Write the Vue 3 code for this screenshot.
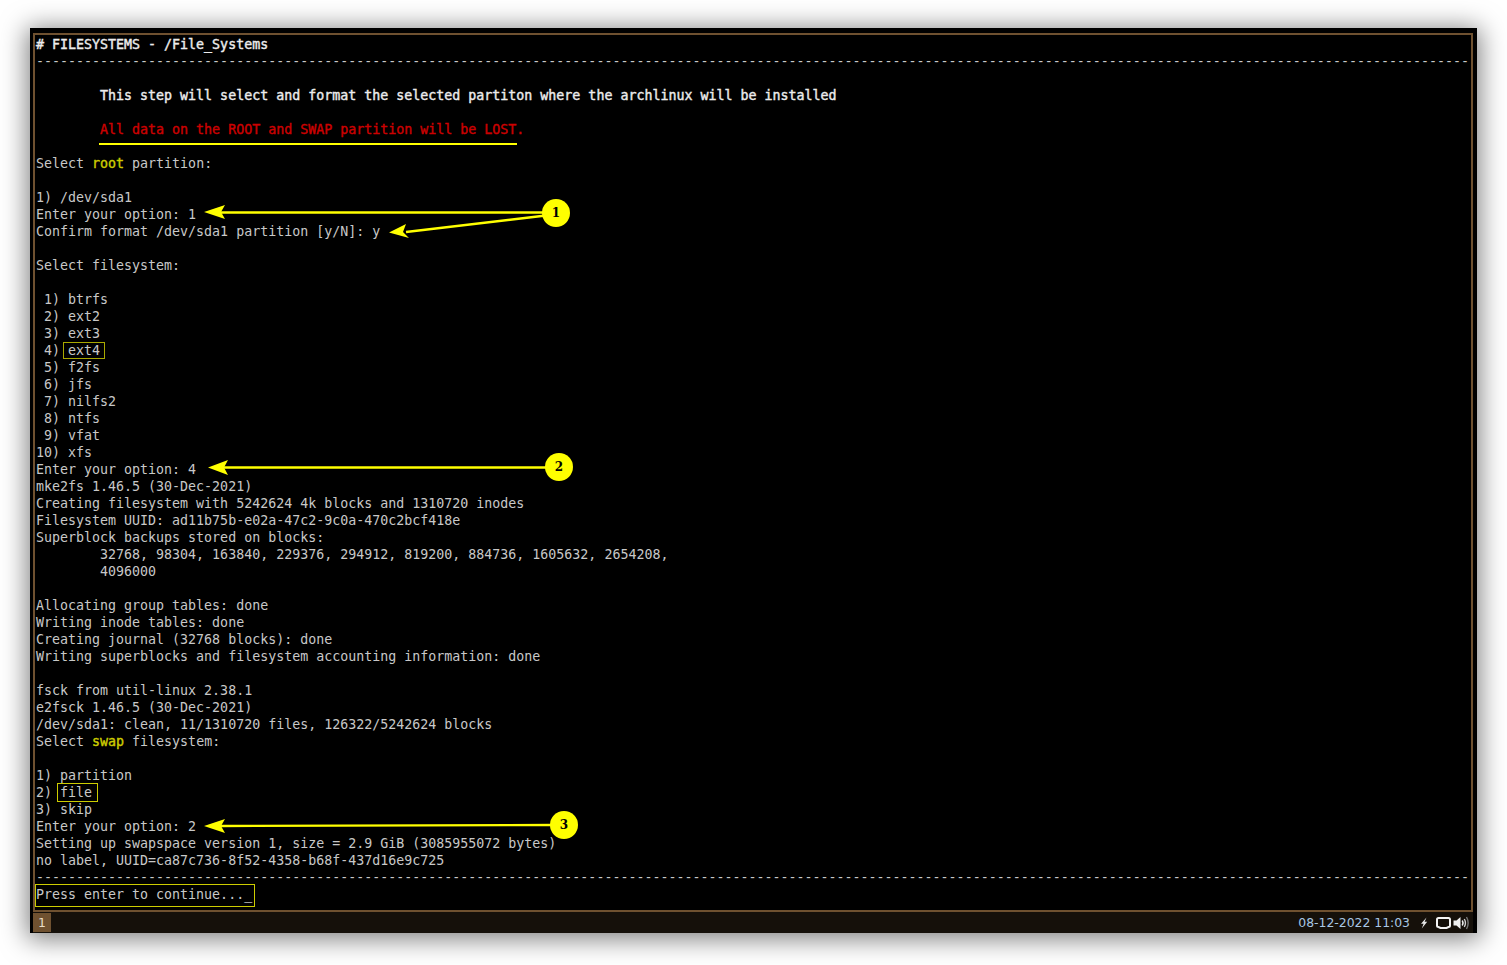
<script setup>
const dash = '-'.repeat(179)
const lines = [
  [{ t: '# FILESYSTEMS - /File_Systems', c: 'bold' }],
  [{ t: dash }],
  [],
  [{ t: '        This step will select and format the selected partiton where the archlinux will be installed', c: 'bold' }],
  [],
  [{ t: '        ' }, { t: 'All data on the ROOT and SWAP partition will be LOST.', c: 'red' }],
  [],
  [{ t: 'Select ' }, { t: 'root', c: 'yellow' }, { t: ' partition:' }],
  [],
  [{ t: '1) /dev/sda1' }],
  [{ t: 'Enter your option: 1' }],
  [{ t: 'Confirm format /dev/sda1 partition [y/N]: y' }],
  [],
  [{ t: 'Select filesystem:' }],
  [],
  [{ t: ' 1) btrfs' }],
  [{ t: ' 2) ext2' }],
  [{ t: ' 3) ext3' }],
  [{ t: ' 4) ext4' }],
  [{ t: ' 5) f2fs' }],
  [{ t: ' 6) jfs' }],
  [{ t: ' 7) nilfs2' }],
  [{ t: ' 8) ntfs' }],
  [{ t: ' 9) vfat' }],
  [{ t: '10) xfs' }],
  [{ t: 'Enter your option: 4' }],
  [{ t: 'mke2fs 1.46.5 (30-Dec-2021)' }],
  [{ t: 'Creating filesystem with 5242624 4k blocks and 1310720 inodes' }],
  [{ t: 'Filesystem UUID: ad11b75b-e02a-47c2-9c0a-470c2bcf418e' }],
  [{ t: 'Superblock backups stored on blocks:' }],
  [{ t: '        32768, 98304, 163840, 229376, 294912, 819200, 884736, 1605632, 2654208,' }],
  [{ t: '        4096000' }],
  [],
  [{ t: 'Allocating group tables: done' }],
  [{ t: 'Writing inode tables: done' }],
  [{ t: 'Creating journal (32768 blocks): done' }],
  [{ t: 'Writing superblocks and filesystem accounting information: done' }],
  [],
  [{ t: 'fsck from util-linux 2.38.1' }],
  [{ t: 'e2fsck 1.46.5 (30-Dec-2021)' }],
  [{ t: '/dev/sda1: clean, 11/1310720 files, 126322/5242624 blocks' }],
  [{ t: 'Select ' }, { t: 'swap', c: 'yellow' }, { t: ' filesystem:' }],
  [],
  [{ t: '1) partition' }],
  [{ t: '2) file' }],
  [{ t: '3) skip' }],
  [{ t: 'Enter your option: 2' }],
  [{ t: 'Setting up swapspace version 1, size = 2.9 GiB (3085955072 bytes)' }],
  [{ t: 'no label, UUID=ca87c736-8f52-4358-b68f-437d16e9c725' }],
  [{ t: dash }],
  [{ t: 'Press enter to continue...' }, { t: '_', c: 'cursor' }],
]
const badges = [
  { n: 1, x: 512, y: 185 },
  { n: 2, x: 515, y: 439 },
  { n: 3, x: 520, y: 797 },
]
</script>

<template>
  <div class="page">
    <div class="window">
      <div class="term">
        <div v-for="(line, i) in lines" :key="i" class="line"><span v-for="(s, j) in line" :key="j" :class="s.c">{{ s.t }}</span></div>
      </div>
      <div class="bar">
        <span class="tag">1</span>
        <div class="tray">
          <span class="clock">08-12-2022 11:03</span>
          <svg class="ico-bolt" width="8" height="12" viewBox="0 0 8 12"><path d="M6.5 0.5 L1 6.8 H3.6 L1.8 11.5 L7.2 4.8 H4.6 Z" fill="#e8e8e8"/></svg>
          <svg class="ico-mon" width="15" height="12" viewBox="0 0 15 12"><path d="M2.5 1 H12.5 Q14 1 14 2.5 V8.5 Q14 10 12.5 10 L10.5 11 H4.5 L2.5 10 Q1 10 1 8.5 V2.5 Q1 1 2.5 1 Z" fill="none" stroke="#f4f4f4" stroke-width="2"/></svg>
          <svg class="ico-vol" width="17" height="14" viewBox="0 0 17 14"><path d="M0.5 4.5 H3.5 L7.5 1 V13 L3.5 9.5 H0.5 Z" fill="#f0f0f0"/><path d="M9.3 4.5 Q10.8 7 9.3 9.5" fill="none" stroke="#f0f0f0" stroke-width="1.5"/><path d="M11.3 3 Q13.6 7 11.3 11" fill="none" stroke="#d0d0d0" stroke-width="1.4"/><path d="M13.5 1 Q16.8 7 13.5 13" fill="none" stroke="#777" stroke-width="1.4"/></svg>
        </div>
      </div>
      <svg class="marks" width="1447" height="905" viewBox="0 0 1447 905">
        <g fill="none" stroke-width="1">
          <rect x="33.5" y="314.5" width="41" height="16" stroke="#a8a800"/>
          <rect x="27.5" y="755.5" width="40" height="18" stroke="#cccc00"/>
          <rect x="5.5" y="856.5" width="219" height="22" stroke="#cccc00"/>
        </g>
        <path d="M69 116 H487" stroke="#ffff00" stroke-width="2" fill="none"/>
        <g stroke="#ffff00" stroke-width="2.4" fill="none">
          <path d="M190 184.5 H520"/>
          <path d="M376 204 L520 187"/>
          <path d="M194 439.5 H522"/>
          <path d="M190 798 L527 797"/>
        </g>
        <g fill="#ffff00">
          <path d="M174 184 L195 177 L191 184 L195 191 Z"/>
          <path d="M359 204.5 L376 196 L373 204 L379 210 Z"/>
          <path d="M178 439.5 L198 432 L194 439.5 L198 447 Z"/>
          <path d="M174 798 L195 791 L191 798 L195 805 Z"/>
        </g>
      </svg>
      <span v-for="b in badges" :key="b.n" class="badge" :style="{ left: b.x + 'px', top: b.y - 14 + 'px' }">{{ b.n }}</span>
    </div>
  </div>
</template>

<style scoped>
.page {
  padding: 28px 30px 32px;
  height: 905px;
  background: #fff;
}
.window {
  position: relative;
  width: 1447px;
  height: 905px;
  box-sizing: border-box;
  background: #000;
  padding: 5px 4px 0 3px;
  display: flex;
  flex-direction: column;
  box-shadow: 0 3px 24px 3px rgba(0, 0, 0, 0.5);
}
.term {
  flex: 1;
  box-sizing: border-box;
  border: 2px solid #6f5130;
  padding: 1px 0 0 1px;
  font-family: "DejaVu Sans Mono", monospace;
  font-size: 13.305px;
  color: #c8c8c8;
  overflow: hidden;
}
.line {
  height: 17px;
  line-height: 17px;
  white-space: pre;
}
.bold { color: #ececec; -webkit-text-stroke: 0.4px #ececec; }
.red { color: #cc0000; -webkit-text-stroke: 0.4px #cc0000; }
.yellow { color: #cccc00; -webkit-text-stroke: 0.4px #cccc00; }
.cursor { color: #eeeeee; }
.bar {
  height: 21px;
  background: #15100a;
  display: flex;
  align-items: center;
  justify-content: space-between;
  font-family: "DejaVu Sans", sans-serif;
  font-size: 12.4px;
}
.tag {
  width: 18px;
  height: 19px;
  background: #6f5130;
  color: #e8dcc8;
  display: flex;
  align-items: center;
  justify-content: center;
}
.tray {
  display: flex;
  align-items: center;
  padding-right: 3px;
}
.clock { color: #a9c7e4; margin-right: 10px; }
.ico-bolt { margin-right: 8px; }
.ico-mon { margin-right: 2px; }
.marks {
  position: absolute;
  left: 0;
  top: 0;
  pointer-events: none;
}
.badge {
  position: absolute;
  width: 28px;
  height: 28px;
  border-radius: 50%;
  background: #ffff00;
  color: #000;
  font-family: "DejaVu Serif", serif;
  font-weight: 700;
  font-size: 12px;
  display: flex;
  align-items: center;
  justify-content: center;
}
</style>

<style>
html, body { background: #fff; }
</style>
